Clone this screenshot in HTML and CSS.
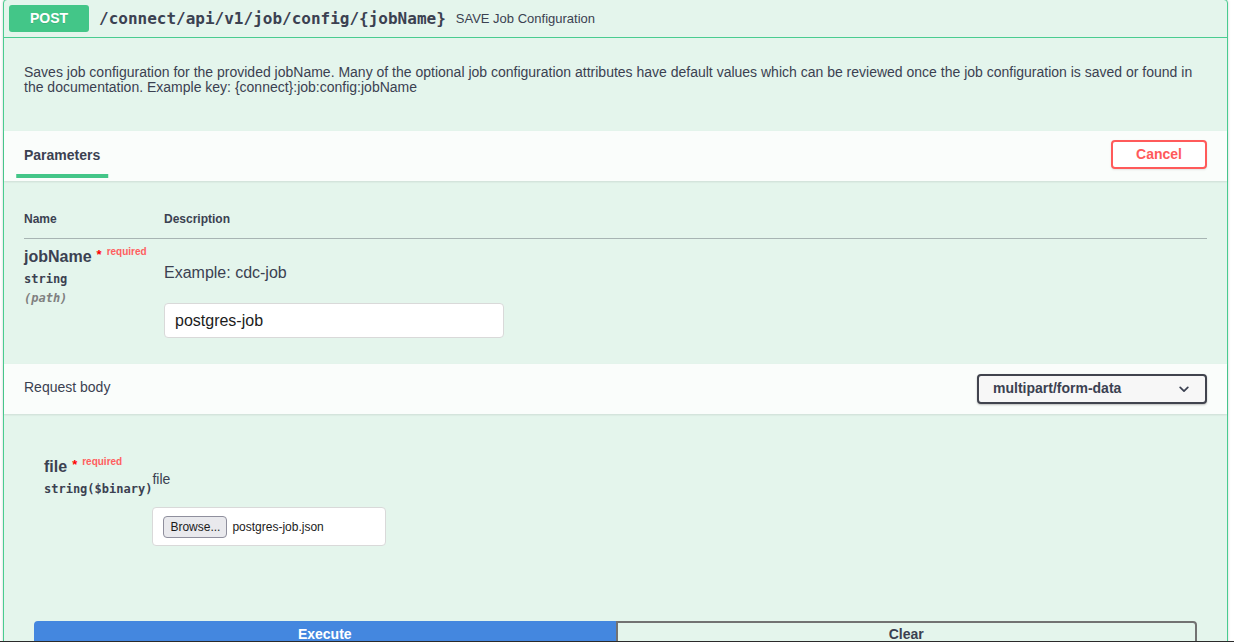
FILE: index.html
```html
<!DOCTYPE html>
<html lang="en">
<head>
<meta charset="utf-8">
<title>POST /connect/api/v1/job/config/{jobName}</title>
<link rel="stylesheet" href="styles.css">
</head>
<body>
<div class="opblock">
  <div class="summary">
    <span class="method">POST</span>
    <span class="path">/connect/api/v1/job/config/{jobName}</span>
    <span class="summary-desc">SAVE Job Configuration</span>
  </div>
  <div class="op-body">
    <div class="description">
      <p>Saves job configuration for the provided jobName. Many of the optional job configuration attributes have default values which can be reviewed once the job configuration is saved or found in the documentation. Example key: {connect}:job:config:jobName</p>
    </div>

    <div class="section-header params-header">
      <div class="tab"><h4 class="tab-title"><span class="tab-label">Parameters</span></h4></div>
      <button class="btn cancel" type="button">Cancel</button>
    </div>

    <div class="params">
      <table class="param-table">
        <thead>
          <tr><th class="col-name">Name</th><th class="col-desc">Description</th></tr>
        </thead>
        <tbody>
          <tr>
            <td class="col-name">
              <div class="param-name">jobName<span class="star">*</span><span class="req">required</span></div>
              <div class="param-type">string</div>
              <div class="param-in">(path)</div>
            </td>
            <td class="col-desc">
              <p class="example">Example: cdc-job</p>
              <input class="text-input" type="text" value="postgres-job">
            </td>
          </tr>
        </tbody>
      </table>
    </div>

    <div class="section-header">
      <h4 class="rb-title">Request body</h4>
      <div class="select">
        <span>multipart/form-data</span>
        <svg class="chevron" width="10" height="7" viewBox="0 0 10 7"><path d="M1.2 1.4 L5 5.2 L8.8 1.4" fill="none" stroke="#3b4151" stroke-width="1.7" stroke-linecap="round" stroke-linejoin="round"/></svg>
      </div>
    </div>

    <div class="rb-body">
      <div class="rb-name">
        <div class="param-name">file<span class="star">*</span><span class="req">required</span></div>
        <div class="param-type">string($binary)</div>
      </div>
      <div class="rb-desc">
        <div class="rb-desc-text">file</div>
        <div class="file-box">
          <span class="browse">Browse...</span>
          <span class="file-name">postgres-job.json</span>
        </div>
      </div>
    </div>

    <div class="btn-group">
      <button class="btn execute" type="button">Execute</button>
      <button class="btn clear" type="button">Clear</button>
    </div>
  </div>
</div>
<div class="edge"></div>
</body>
</html>
```

FILE: styles.css
```css
html, body {
  margin: 0;
  padding: 0;
  background: #ffffff;
}

body {
  font-family: "Liberation Sans", Arial, Helvetica, sans-serif;
  color: #3b4151;
  overflow: hidden;
}

.opblock {
  margin: -1px 6px 0 3px;
  border: 1px solid #49cc90;
  border-radius: 4px;
  background: #e4f5ec;
  box-shadow: 0 0 3px rgba(0, 0, 0, 0.19);
}

/* summary */
.summary {
  display: flex;
  align-items: center;
  padding: 5px;
  border-bottom: 1px solid #49cc90;
}

.method {
  display: inline-block;
  min-width: 80px;
  padding: 6px 0;
  line-height: 15px;
  font-size: 14px;
  font-weight: 700;
  text-align: center;
  color: #ffffff;
  background: #43c688;
  border-radius: 3px;
  text-shadow: 0 1px 0 rgba(0, 0, 0, 0.1);
}

.path {
  padding: 0 10px;
  font-family: "DejaVu Sans Mono", "Liberation Mono", monospace;
  font-size: 16px;
  font-weight: 700;
  color: #3b4151;
}

.summary-desc {
  font-size: 13px;
  color: #3b4151;
}

/* description */
.description {
  padding: 27px 20px 36px;
}

.description p {
  margin: 0;
  font-size: 14px;
  line-height: 15px;
  color: #3b4151;
}

/* section headers */
.section-header {
  display: flex;
  align-items: center;
  justify-content: space-between;
  min-height: 50px;
  box-sizing: border-box;
  padding: 0 20px;
  background: #fafdfb;
  box-shadow: 0 1px 2px rgba(0, 0, 0, 0.1);
}

.params-header {
  padding-bottom: 3px;
}

.tab-title {
  margin: 0;
  font-size: 14px;
  font-weight: 700;
  line-height: 16px;
  color: #3b4151;
}

.tab-label {
  position: relative;
  display: inline-block;
}

.tab-label::after {
  content: "";
  position: absolute;
  left: 50%;
  bottom: -15px;
  width: 120%;
  height: 4px;
  transform: translateX(-50%);
  background: #43c688;
}

.btn {
  font-family: "Liberation Sans", Arial, Helvetica, sans-serif;
  font-size: 14px;
  font-weight: 700;
  line-height: 15px;
  background: transparent;
  border: 2px solid #888;
  border-radius: 4px;
  cursor: pointer;
}

.cancel {
  padding: 5px 23px;
  color: #ff5a5a;
  border-color: #ff5a5a;
  background: #ffffff;
  box-shadow: 0 1px 2px rgba(0, 0, 0, 0.1);
}

/* params table */
.params {
  padding: 20px 20px 20px;
}

.param-table {
  width: 100%;
  border-collapse: collapse;
}

.param-table th {
  text-align: left;
  padding: 11px 0 12px;
  font-size: 12px;
  line-height: 14px;
  font-weight: 700;
  color: #3b4151;
  border-bottom: 1px solid rgba(59, 65, 81, 0.2);
}

.param-table th.col-name,
.param-table td.col-name {
  width: 140px;
}

.param-table td {
  vertical-align: top;
  padding: 8px 0 6px;
}

.param-table td.col-name {
  padding-top: 3px;
}

.param-name {
  font-size: 16px;
  line-height: 20px;
  font-weight: 700;
  color: #3b4151;
  white-space: nowrap;
}

.star {
  margin-left: 5px;
  font-size: 13px;
  font-weight: 700;
  color: #ff0000;
  vertical-align: 3px;
}

.req {
  margin-left: 5px;
  font-size: 10px;
  font-weight: 700;
  color: #ff5f5f;
  vertical-align: 7px;
}

.param-type {
  margin-top: 5px;
  font-family: "DejaVu Sans Mono", "Liberation Mono", monospace;
  font-size: 12px;
  line-height: 15px;
  font-weight: 700;
  color: #3b4151;
  white-space: nowrap;
}

.param-in {
  margin-top: 4px;
  font-family: "DejaVu Sans Mono", "Liberation Mono", monospace;
  font-size: 12px;
  line-height: 15px;
  font-weight: 700;
  font-style: italic;
  color: #808080;
}

.example {
  margin: 16px 0 0;
  font-size: 16px;
  line-height: 20px;
  color: #3b4151;
}

.text-input {
  display: block;
  margin-top: 20px;
  width: 340px;
  height: 35px;
  box-sizing: border-box;
  padding: 8px 10px;
  font-family: "Liberation Sans", Arial, Helvetica, sans-serif;
  font-size: 16px;
  color: #1b1b1b;
  background: #ffffff;
  border: 1px solid #d9d9d9;
  border-radius: 4px;
  outline: none;
}

/* request body */
.rb-title {
  margin: 0 0 4px;
  font-size: 14px;
  font-weight: 400;
  line-height: 16px;
  color: #3b4151;
}

.select {
  display: flex;
  align-items: center;
  justify-content: space-between;
  width: 230px;
  height: 30px;
  box-sizing: border-box;
  padding: 0 16px 3px 14px;
  font-size: 14px;
  font-weight: 700;
  color: #3b4151;
  background: #f7f7f7;
  border: 2px solid #41444e;
  border-radius: 4px;
  box-shadow: 0 1px 2px rgba(0, 0, 0, 0.25);
}

.chevron {
  margin-top: 4px;
}

.rb-body {
  display: flex;
  align-items: flex-start;
  padding: 38px 20px 45px 40px;
}

.rb-name {
  flex: none;
}

.rb-desc {
  padding-top: 19px;
}

.rb-desc-text {
  font-size: 14px;
  line-height: 17px;
  color: #3b4151;
}

.file-box {
  display: flex;
  align-items: center;
  gap: 5px;
  margin-top: 19px;
  width: 234px;
  height: 39px;
  box-sizing: border-box;
  padding: 0 10px;
  background: #ffffff;
  border: 1px solid #d9d9d9;
  border-radius: 4px;
}

.browse {
  display: inline-block;
  height: 22px;
  box-sizing: border-box;
  padding: 0 6px;
  font-size: 12px;
  line-height: 20px;
  color: #1b1b1b;
  background: #e9e9ed;
  border: 1px solid #8f8f9d;
  border-radius: 4px;
}

.file-name {
  font-size: 12px;
  color: #1b1b1b;
}

/* buttons */
.btn-group {
  display: flex;
  padding: 30px;
}

.btn-group .btn {
  flex: 1 1 0;
  padding: 4px 40px 8px;
}

.execute {
  color: #ffffff;
  background: #4487df;
  border-color: #4487df;
  border-radius: 4px 0 0 4px;
}

.clear {
  color: #3b4151;
  border-color: #727272;
  border-radius: 0 4px 4px 0;
}

.edge {
  position: fixed;
  left: 0;
  right: 0;
  bottom: 0;
  height: 1px;
  background: #2a2a2a;
}
```
